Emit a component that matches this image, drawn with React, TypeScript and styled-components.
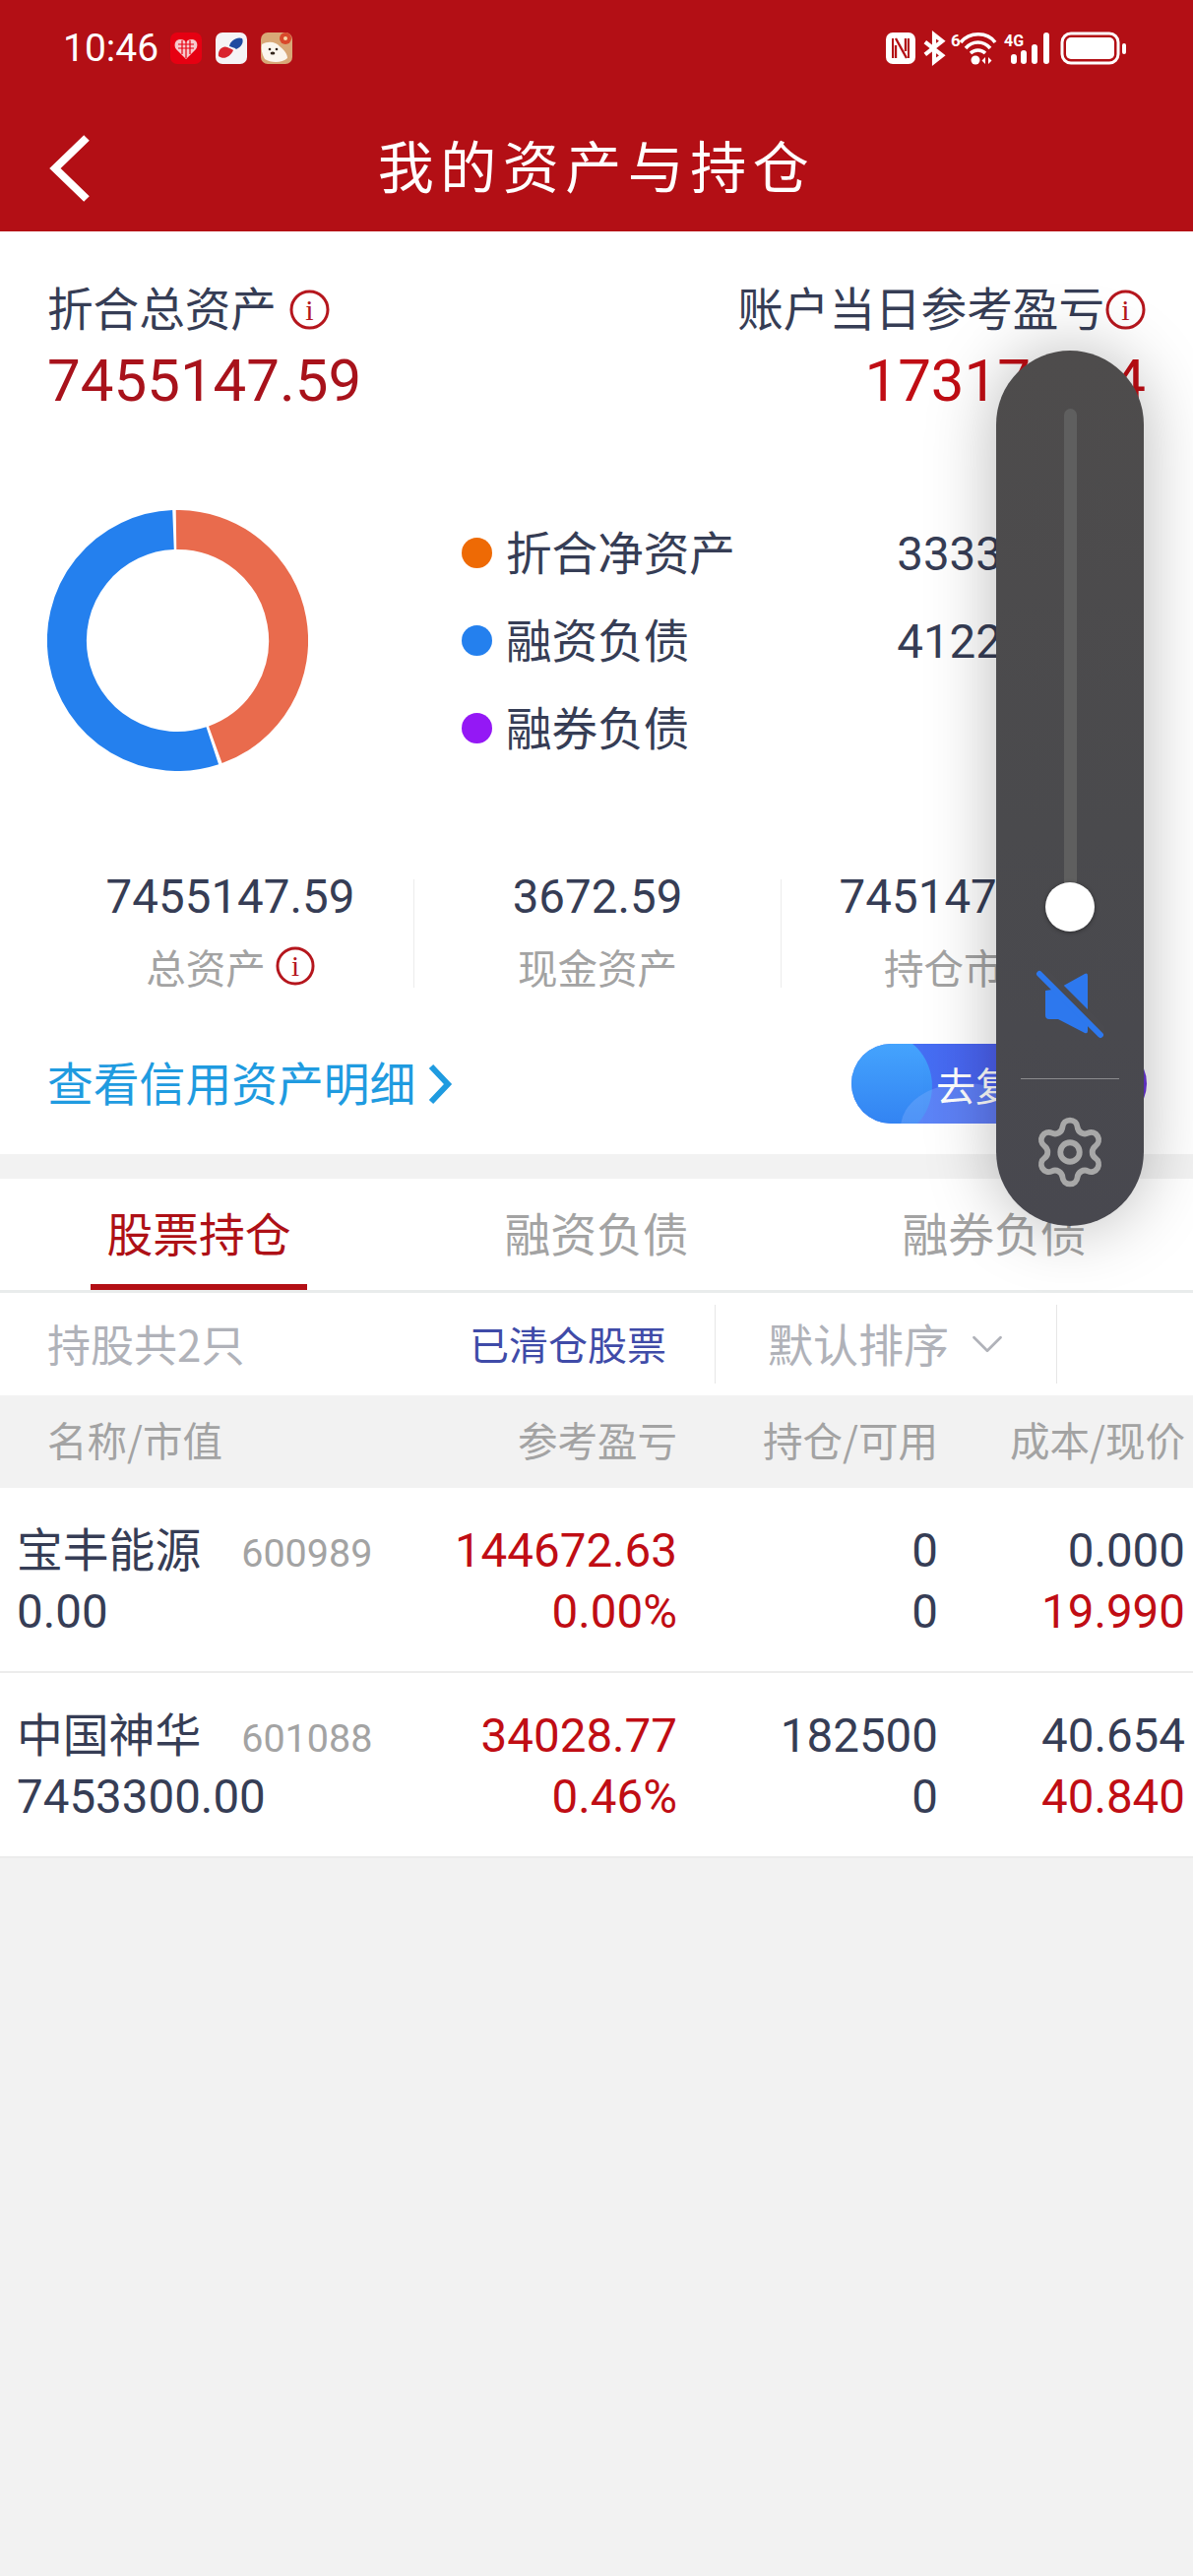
import React from 'react';
import styled, { createGlobalStyle } from 'styled-components';
import { Settings, ChevronDown } from 'lucide-react';

const GlobalStyle = createGlobalStyle`
  html, body {
    margin: 0;
    padding: 0;
    background-color: #f2f2f2;
  }
  * {
    box-sizing: border-box;
  }
`;

const DIGITS = `Roboto, "Noto Sans CJK SC", sans-serif`;
const CJK = `"Noto Sans CJK SC", "Noto Sans", sans-serif`;
const INK = '#363d55';
const GREY = '#a3a3a3';

const Page = styled.div`
  position: relative;
  width: 1212px;
  height: 2616px;
  overflow: hidden;
  background-color: #f2f2f2;
  font-family: ${CJK};
  color: ${INK};
`;

const Header = styled.header`
  height: 235px;
  background-color: #b30f15;
  color: #ffffff;
`;

const StatusBar = styled.div`
  height: 100px;
  padding: 33px 67px 0 64px;
  display: flex;
  justify-content: space-between;
  align-items: flex-start;
`;

const StatusGroup = styled.div`
  display: flex;
  align-items: center;
  height: 32px;
`;

const Clock = styled.span`
  font-family: ${DIGITS};
  font-size: 39px;
  line-height: 32px;
  width: 109px;
`;

const AppIcon = styled.svg`
  width: 32px;
  height: 32px;
  margin-right: 14px;
  display: block;
`;

const SysIcon = styled.svg<{ $gap?: number }>`
  height: 34px;
  display: block;
  overflow: visible;
  margin-left: ${({ $gap }) => $gap ?? 0}px;
`;

const NavBar = styled.div`
  height: 135px;
  padding: 6px 50px 0;
  display: grid;
  grid-template-columns: 1fr auto 1fr;
  align-items: center;
`;

const NavTitle = styled.h1`
  margin: 0 0 10px;
  font-size: 57px;
  font-weight: 400;
  letter-spacing: 6.5px;
  line-height: 70px;
`;

const Summary = styled.section`
  height: 937px;
  background-color: #ffffff;
  padding-top: 52px;
`;

const TotalsRow = styled.div`
  display: flex;
  justify-content: space-between;
  padding: 0 48px;
`;

const TotalBlock = styled.div<{ $right?: boolean }>`
  display: flex;
  flex-direction: column;
  align-items: ${({ $right }) => ($right ? 'flex-end' : 'flex-start')};
  gap: 10px;
`;

const TotalLabel = styled.div`
  display: flex;
  align-items: center;
  gap: 13px;
  font-size: 46.6px;
  line-height: 54px;
`;

const TightLabel = styled(TotalLabel)`
  gap: 1px;
`;

// the CJK glyphs sit low in their line box, this lifts them to the icon's centre
const LiftedText = styled.span<{ $lift?: number }>`
  transform: translateY(-${({ $lift }) => $lift ?? 3}px);
`;

const TotalValue = styled.div<{ $tone: string }>`
  font-family: ${DIGITS};
  font-size: 60px;
  line-height: 72px;
  color: ${({ $tone }) => $tone};
`;

const ChartRow = styled.div`
  display: flex;
  margin-top: 95px;
  padding: 0 48px;
  height: 265px;
`;

const Legend = styled.div`
  flex: 1;
  margin-left: 156px;
  display: flex;
  flex-direction: column;
  justify-content: center;
  gap: 35px;
`;

const LegendRow = styled.div`
  display: flex;
  align-items: center;
  height: 54px;
  font-size: 46.6px;
`;

const LegendDot = styled.span<{ $color: string }>`
  width: 31px;
  height: 31px;
  border-radius: 50%;
  margin-right: 14px;
  background-color: ${({ $color }) => $color};
`;

const LegendValue = styled.span`
  margin-left: auto;
  margin-top: 2px;
  font-family: ${DIGITS};
  font-size: 47.5px;
`;

const Stats = styled.div`
  display: grid;
  grid-template-columns: 372px 373px 371px;
  margin-top: 110px;
  padding: 0 48px;
  height: 104px;
`;

const StatCell = styled.div<{ $divided?: boolean }>`
  display: flex;
  flex-direction: column;
  align-items: center;
  border-left: ${({ $divided }) => ($divided ? '1px solid #ececec' : 'none')};
`;

const StatValue = styled.div`
  font-family: ${DIGITS};
  font-size: 47.5px;
  line-height: 36px;
`;

const StatLabel = styled.div`
  display: flex;
  align-items: center;
  gap: 10px;
  margin-top: 30px;
  height: 44px;
  font-size: 40.5px;
  color: ${GREY};
`;

const ActionRow = styled.div`
  display: flex;
  align-items: center;
  justify-content: space-between;
  margin-top: 63px;
  padding: 0 47px 0 48px;
  height: 81px;
`;

const DetailLink = styled.a`
  display: flex;
  align-items: center;
  gap: 12px;
  font-size: 46.8px;
  color: #1f9be0;
`;

const ReviewButton = styled.div`
  position: relative;
  width: 300px;
  height: 81px;
  border-radius: 41px;
  overflow: hidden;
  padding-left: 86px;
  display: flex;
  align-items: center;
  color: #ffffff;
  font-size: 40px;
  background: linear-gradient(90deg, #3f7cf6 0%, #4a63f0 45%, #6a35d8 100%);
`;

const ButtonBlob = styled.span<{ $big?: boolean }>`
  position: absolute;
  border-radius: 50%;
  left: ${({ $big }) => ($big ? '-24px' : '50px')};
  top: ${({ $big }) => ($big ? '-12px' : '40px')};
  width: ${({ $big }) => ($big ? '106px' : '130px')};
  height: ${({ $big }) => ($big ? '110px' : '90px')};
  background: ${({ $big }) =>
    $big
      ? 'linear-gradient(180deg, #47a8ff 0%, #2f7df0 100%)'
      : 'rgba(140, 180, 255, 0.32)'};
`;

const ButtonText = styled.span`
  position: relative;
`;

const Holdings = styled.section`
  margin-top: 25px;
  background-color: #ffffff;
`;

const Tabs = styled.div`
  display: grid;
  grid-template-columns: repeat(3, 404px);
  height: 116px;
  border-bottom: 3px solid #e9ecec;
`;

const Tab = styled.div<{ $active?: boolean }>`
  position: relative;
  display: flex;
  align-items: center;
  justify-content: center;
  padding-bottom: 6px;
  font-size: 46.8px;
  color: ${({ $active }) => ($active ? '#ae1016' : GREY)};

  &::after {
    content: '';
    display: ${({ $active }) => ($active ? 'block' : 'none')};
    position: absolute;
    left: 92px;
    bottom: 0;
    width: 220px;
    height: 6px;
    background-color: #b30f15;
  }
`;

const FilterRow = styled.div`
  display: flex;
  align-items: center;
  height: 104px;
`;

const HoldCount = styled.div`
  width: 477px;
  padding: 0 0 3px 48px;
  font-size: 44px;
  color: #b0b2b9;
`;

const ClearedLink = styled.a`
  width: 249px;
  padding-bottom: 3px;
  font-size: 40px;
  color: #3f4ba8;
`;

const SortBox = styled.div`
  width: 348px;
  height: 80px;
  padding-left: 53px;
  display: flex;
  align-items: center;
  gap: 12px;
  font-size: 46px;
  color: #b0b2b9;
  border-left: 1px solid #e6e6e6;
  border-right: 1px solid #e6e6e6;
`;

const HoldingsGrid = styled.div`
  display: grid;
  grid-template-columns: 430px 258px 265px 251px;
  padding-right: 8px;
`;

const TableHead = styled(HoldingsGrid)`
  height: 94px;
  padding-bottom: 6px;
  align-items: center;
  background-color: #f2f2f2;
  font-size: 40.5px;
  color: #a3a3a3;
`;

const HeadFirst = styled.div`
  padding-left: 48px;
`;

const HeadCell = styled.div`
  text-align: right;
`;

const TableRow = styled(HoldingsGrid)`
  height: 188px;
  padding-top: 33px;
  border-bottom: 2px solid #ececec;
`;

const NameLine = styled.div`
  display: flex;
  align-items: center;
  padding: 0 0 4px 17px;
  height: 62px;
  font-size: 46.8px;
`;

const Code = styled.span`
  margin: 8px 0 0 41px;
  font-family: ${DIGITS};
  font-size: 39.5px;
  color: #a3a3a3;
`;

const MarketValue = styled.div`
  padding-left: 17px;
  height: 62px;
  line-height: 62px;
  font-family: ${DIGITS};
  font-size: 47.5px;
`;

const NameCell = styled.div`
  display: flex;
  flex-direction: column;
`;

const NumberCell = styled.div<{ $tone: string }>`
  height: 62px;
  line-height: 62px;
  text-align: right;
  font-family: ${DIGITS};
  font-size: 47.5px;
  color: ${({ $tone }) => $tone};
`;

const NumberStack = styled.div`
  display: flex;
  flex-direction: column;
`;

const VolumePanel = styled.aside`
  position: absolute;
  left: 1012px;
  top: 356px;
  width: 150px;
  height: 889px;
  border-radius: 75px;
  background: linear-gradient(180deg, #4e4c4c 0%, #4a4a4d 55%, #48484f 100%);
  box-shadow: 0 0 70px rgba(0, 0, 0, 0.28);
  display: flex;
  flex-direction: column;
  align-items: center;
  padding-top: 59px;
`;

const VolumeTrack = styled.div`
  width: 13px;
  height: 490px;
  border-radius: 7px 7px 0 0;
  background-color: #5f5f5f;
`;

const VolumeThumb = styled.div`
  width: 50px;
  height: 50px;
  margin-top: -9px;
  border-radius: 50%;
  background-color: #ffffff;
  box-shadow: 0 1px 4px rgba(0, 0, 0, 0.4);
`;

const MuteIcon = styled.svg`
  width: 70px;
  height: 70px;
  margin-top: 39px;
  display: block;
`;

const PanelDivider = styled.div`
  width: 100px;
  height: 1px;
  margin-top: 40px;
  background-color: #8c8c8e;
`;

const GearWrap = styled.div`
  margin-top: 35px;
  display: flex;
  color: #a8a8a8;
`;

const InfoIcon: React.FC<{ size?: number }> = ({ size = 41 }) => (
  <svg width={size} height={size} viewBox="0 0 41 41" fill="none">
    <circle cx="20.5" cy="20.5" r="18.5" stroke="#b5161d" strokeWidth="3" />
    <text
      x="20.5"
      y="31"
      textAnchor="middle"
      fontFamily='"Liberation Serif", serif'
      fontSize="30"
      fill="#b5161d"
    >
      i
    </text>
  </svg>
);

const Donut: React.FC = () => (
  <svg width="265" height="265" viewBox="0 0 265 265">
    <path
      d="M131 20 A112.5 112.5 0 0 1 170.8 238.3"
      fill="none"
      stroke="#e96b4d"
      strokeWidth="40"
    />
    <path
      d="M167.8 239.3 A112.5 112.5 0 1 1 128 20.1"
      fill="none"
      stroke="#2480ee"
      strokeWidth="40"
    />
  </svg>
);

const MuteGlyph: React.FC = () => (
  <MuteIcon viewBox="0 0 70 70">
    <path
      d="M10 21 L23 19 L50 4 Q53 2.5 53 6 L53 62 Q53 65 50 64 L23 50 L14 50 Q10 50 10 46 Z"
      fill="#2d78ee"
    />
    <line x1="7" y1="-1" x2="73" y2="65" stroke="#4a4a4f" strokeWidth="7" />
    <line x1="4" y1="4" x2="66" y2="66" stroke="#2d78ee" strokeWidth="6" strokeLinecap="round" />
  </MuteIcon>
);

const HeartApp: React.FC = () => (
  <AppIcon viewBox="0 0 32 32">
    <rect width="32" height="32" rx="7" fill="#e60012" />
    <path
      d="M16 27 L6 17 C3 13 5 7 10 7 C13 7 15 8 16 10 C17 8 19 7 22 7 C27 7 29 13 26 17 Z"
      fill="#f7c9cc"
    />
    <path d="M8 12 H24 M8 16 H24 M12 8 V22 M16 9 V26 M20 8 V22" stroke="#e60012" strokeWidth="1.2" />
  </AppIcon>
);

const BankApp: React.FC = () => (
  <AppIcon viewBox="0 0 32 32">
    <rect width="32" height="32" rx="7" fill="#f5f3f6" />
    <path d="M27 6 C22 4 15 8 14 14 C16 15 19 15 21 17 C26 15 29 10 27 6 Z" fill="#1f4aa0" />
    <path d="M3 24 C2 17 8 13 12 15 C14 16 17 17 18 18 C15 25 8 28 3 24 Z" fill="#d9232e" />
  </AppIcon>
);

const DogApp: React.FC = () => (
  <AppIcon viewBox="0 0 32 32">
    <rect width="32" height="32" rx="7" fill="#d8a877" />
    <circle cx="25" cy="6" r="6" fill="#d9482b" />
    <circle cx="25" cy="6" r="2" fill="#f6d8a8" />
    <path d="M1 12 C8 8 16 10 19 14 C24 18 27 22 27 26 C22 31 10 31 4 27 C1 22 0 17 1 12 Z" fill="#fbf6ee" />
    <circle cx="9" cy="17" r="1.3" fill="#33261c" />
    <circle cx="16" cy="17" r="1.3" fill="#33261c" />
    <ellipse cx="12" cy="21" rx="2.4" ry="1.6" fill="#33261c" />
  </AppIcon>
);

const SystemIcons: React.FC = () => (
  <StatusGroup>
    <SysIcon viewBox="0 0 30 34" width="30" fill="none">
      <rect x="0" y="1" width="30" height="32" rx="7" fill="#ffffff" />
      <path d="M7 7 V27 M23 7 V27" stroke="#b30f15" strokeWidth="2" />
      <path d="M10 7 L21 27 M10 14 V27 M20 7 V20" stroke="#b30f15" strokeWidth="2.4" />
    </SysIcon>
    <SysIcon viewBox="0 0 24 34" width="22" $gap={8} fill="none">
      <path d="M2 10 L21 25 L12 32 V2 L21 9 L2 24" stroke="#ffffff" strokeWidth="4.5" />
    </SysIcon>
    <SysIcon viewBox="0 0 46 34" width="46" $gap={6} fill="none">
      <text x="0" y="15" fontFamily="Roboto, sans-serif" fontWeight="700" fontSize="17" fill="#ffffff">
        6
      </text>
      <path d="M10 11 C19 0 37 0 45 11" stroke="#ffffff" strokeWidth="3.6" />
      <path d="M15 17 C22 9 33 9 40 17" stroke="#ffffff" strokeWidth="3.6" />
      <path d="M20 22 C24 18 31 18 35 22" stroke="#ffffff" strokeWidth="3.4" />
      <circle cx="25" cy="29" r="4.5" fill="#ffffff" />
      <path d="M35 26 L35 33 L31.5 29.5 Z M38 26 L38 33 L41.5 29.5 Z" fill="#ffffff" />
    </SysIcon>
    <SysIcon viewBox="0 0 48 34" width="48" $gap={8}>
      <text x="0" y="15" fontFamily="Roboto, sans-serif" fontWeight="700" fontSize="16" fill="#ffffff">
        4G
      </text>
      <rect x="7" y="23" width="6" height="10" rx="3" fill="#ffffff" />
      <rect x="17" y="19" width="6" height="14" rx="3" fill="#ffffff" />
      <rect x="28" y="13" width="6" height="20" rx="3" fill="#ffffff" />
      <rect x="40" y="1" width="6" height="32" rx="3" fill="#ffffff" />
    </SysIcon>
    <SysIcon viewBox="0 0 68 34" width="68" $gap={9} fill="none">
      <rect x="2" y="2" width="57" height="30" rx="9" stroke="#ffffff" strokeWidth="3" />
      <rect x="6" y="6" width="49" height="22" rx="5" fill="#ffffff" />
      <rect x="63" y="12" width="4" height="11" rx="2" fill="#ffffff" />
    </SysIcon>
  </StatusGroup>
);

interface HoldingRow {
  name: string;
  code: string;
  marketValue: string;
  profit: string;
  profitRate: string;
  position: string;
  available: string;
  cost: string;
  price: string;
}

const holdingRows: HoldingRow[] = [
  {
    name: '宝丰能源',
    code: '600989',
    marketValue: '0.00',
    profit: '144672.63',
    profitRate: '0.00%',
    position: '0',
    available: '0',
    cost: '0.000',
    price: '19.990',
  },
  {
    name: '中国神华',
    code: '601088',
    marketValue: '7453300.00',
    profit: '34028.77',
    profitRate: '0.46%',
    position: '182500',
    available: '0',
    cost: '40.654',
    price: '40.840',
  },
];

const RED = '#c00d14';

const App: React.FC = () => {
  return (
    <Page>
      <GlobalStyle />
      <Header>
        <StatusBar>
          <StatusGroup>
            <Clock>10:46</Clock>
            <HeartApp />
            <BankApp />
            <DogApp />
          </StatusGroup>
          <SystemIcons />
        </StatusBar>
        <NavBar>
          <svg width="42" height="70" viewBox="0 0 42 70" fill="none">
            <path d="M38 4 L6 35 L38 66" stroke="#ffffff" strokeWidth="8" />
          </svg>
          <NavTitle>我的资产与持仓</NavTitle>
        </NavBar>
      </Header>

      <Summary>
        <TotalsRow>
          <TotalBlock>
            <TotalLabel>
              <LiftedText>折合总资产</LiftedText>
              <InfoIcon />
            </TotalLabel>
            <TotalValue $tone="#a8121b">7455147.59</TotalValue>
          </TotalBlock>
          <TotalBlock $right>
            <TightLabel>
              <LiftedText>账户当日参考盈亏</LiftedText>
              <InfoIcon />
            </TightLabel>
            <TotalValue $tone="#c00d14">173171.14</TotalValue>
          </TotalBlock>
        </TotalsRow>

        <ChartRow>
          <Donut />
          <Legend>
            <LegendRow>
              <LegendDot $color="#ee6a05" />
              <LiftedText>折合净资产</LiftedText>
              <LegendValue>3333047.59</LegendValue>
            </LegendRow>
            <LegendRow>
              <LegendDot $color="#2480ee" />
              <LiftedText>融资负债</LiftedText>
              <LegendValue>4122100.00</LegendValue>
            </LegendRow>
            <LegendRow>
              <LegendDot $color="#9418f5" />
              <LiftedText>融券负债</LiftedText>
              <LegendValue>0.00</LegendValue>
            </LegendRow>
          </Legend>
        </ChartRow>

        <Stats>
          <StatCell>
            <StatValue>7455147.59</StatValue>
            <StatLabel>
              总资产
              <InfoIcon size={40} />
            </StatLabel>
          </StatCell>
          <StatCell $divided>
            <StatValue>3672.59</StatValue>
            <StatLabel>现金资产</StatLabel>
          </StatCell>
          <StatCell $divided>
            <StatValue>7451475.00</StatValue>
            <StatLabel>持仓市值</StatLabel>
          </StatCell>
        </Stats>

        <ActionRow>
          <DetailLink>
            <LiftedText>查看信用资产明细</LiftedText>
            <svg width="26" height="42" viewBox="0 0 26 42" fill="none">
              <path d="M4 3 L21 21 L4 39" stroke="#1f9be0" strokeWidth="6" />
            </svg>
          </DetailLink>
          <ReviewButton>
            <ButtonBlob $big />
            <ButtonBlob />
            <ButtonText>去复盘</ButtonText>
          </ReviewButton>
        </ActionRow>
      </Summary>

      <Holdings>
        <Tabs>
          <Tab $active>股票持仓</Tab>
          <Tab>融资负债</Tab>
          <Tab>融券负债</Tab>
        </Tabs>
        <FilterRow>
          <HoldCount>持股共2只</HoldCount>
          <ClearedLink>已清仓股票</ClearedLink>
          <SortBox>
            <LiftedText $lift={2}>默认排序</LiftedText>
            <ChevronDown size={54} strokeWidth={1.2} />
          </SortBox>
        </FilterRow>
        <TableHead>
          <HeadFirst>名称/市值</HeadFirst>
          <HeadCell>参考盈亏</HeadCell>
          <HeadCell>持仓/可用</HeadCell>
          <HeadCell>成本/现价</HeadCell>
        </TableHead>
        {holdingRows.map((row) => (
          <TableRow key={row.code}>
            <NameCell>
              <NameLine>
                <LiftedText>{row.name}</LiftedText>
                <Code>{row.code}</Code>
              </NameLine>
              <MarketValue>{row.marketValue}</MarketValue>
            </NameCell>
            <NumberStack>
              <NumberCell $tone={RED}>{row.profit}</NumberCell>
              <NumberCell $tone={RED}>{row.profitRate}</NumberCell>
            </NumberStack>
            <NumberStack>
              <NumberCell $tone={INK}>{row.position}</NumberCell>
              <NumberCell $tone={INK}>{row.available}</NumberCell>
            </NumberStack>
            <NumberStack>
              <NumberCell $tone={INK}>{row.cost}</NumberCell>
              <NumberCell $tone={RED}>{row.price}</NumberCell>
            </NumberStack>
          </TableRow>
        ))}
      </Holdings>

      <VolumePanel>
        <VolumeTrack />
        <VolumeThumb />
        <MuteGlyph />
        <PanelDivider />
        <GearWrap>
          <Settings size={78} strokeWidth={1.8} />
        </GearWrap>
      </VolumePanel>
    </Page>
  );
};

export default App;
